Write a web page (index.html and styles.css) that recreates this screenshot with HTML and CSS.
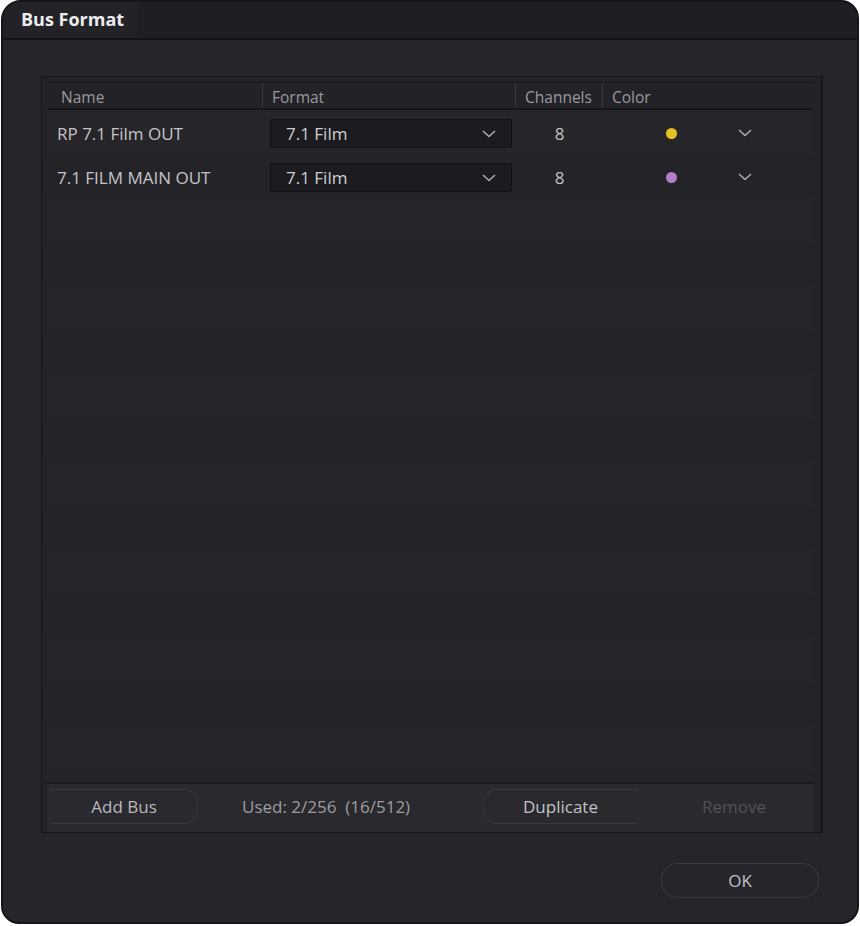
FILE: index.html
```html
<!DOCTYPE html>
<html>
<head>
<meta charset="utf-8">
<title>Bus Format</title>
<link rel="stylesheet" href="styles.css">
</head>
<body>
<div class="window">
  <div class="titlebar">
    <div class="title">Bus Format</div>
  </div>
  <div class="body">
    <div class="panel">
      <div class="panel-inner">
        <div class="thead">
          <div class="th c-name">Name</div>
          <div class="th c-format">Format</div>
          <div class="th c-ch">Channels</div>
          <div class="th c-color">Color</div>
        </div>
        <div class="tbody">
          <div class="row">
            <div class="c-name cell">RP 7.1 Film OUT</div>
            <div class="c-format cell">
              <div class="select"><span>7.1 Film</span>
                <svg class="chev" width="14" height="8" viewBox="0 0 14 8"><path d="M1 1l6 5.5L13 1" fill="none" stroke="#a9a9ae" stroke-width="1.6"/></svg>
              </div>
            </div>
            <div class="c-ch cell">8</div>
            <div class="c-color cell">
              <span class="dot yellow"></span>
              <svg class="chev2" width="14" height="8" viewBox="0 0 14 8"><path d="M1 1l6 5.5L13 1" fill="none" stroke="#a9a9ae" stroke-width="1.6"/></svg>
            </div>
          </div>
          <div class="row">
            <div class="c-name cell">7.1 FILM MAIN OUT</div>
            <div class="c-format cell">
              <div class="select"><span>7.1 Film</span>
                <svg class="chev" width="14" height="8" viewBox="0 0 14 8"><path d="M1 1l6 5.5L13 1" fill="none" stroke="#a9a9ae" stroke-width="1.6"/></svg>
              </div>
            </div>
            <div class="c-ch cell">8</div>
            <div class="c-color cell">
              <span class="dot purple"></span>
              <svg class="chev2" width="14" height="8" viewBox="0 0 14 8"><path d="M1 1l6 5.5L13 1" fill="none" stroke="#a9a9ae" stroke-width="1.6"/></svg>
            </div>
          </div>
        </div>
        <div class="footer">
          <div class="btn add">Add Bus</div>
          <div class="used">Used: 2/256&nbsp; (16/512)</div>
          <div class="btn dup">Duplicate</div>
          <div class="btn remove">Remove</div>
        </div>
      </div>
    </div>
    <div class="actions">
      <div class="ok">OK</div>
    </div>
  </div>
</div>
</body>
</html>
```

FILE: styles.css
```css
* { box-sizing: border-box; }
html, body { margin: 0; padding: 0; background: #ffffff; }
body {
  width: 860px;
  height: 926px;
  font-family: "Open Sans", "Noto Sans", sans-serif;
  overflow: hidden;
}
.window {
  width: 858px;
  height: 924px;
  margin-left: 1px;
  background: #26252a;
  border: 2px solid #151418;
  border-radius: 20px 18px 18px 18px;
  overflow: hidden;
  display: flex;
  flex-direction: column;
}
.titlebar {
  height: 38px;
  flex: none;
  background: #1f1e23;
  border-bottom: 2px solid #141317;
  display: flex;
}
.title {
  width: 134px;
  padding-left: 18px;
  line-height: 34px;
  font-weight: 700;
  font-size: 18px;
  color: #ececef;
  background: #232227;
  letter-spacing: 0;
}
.body {
  flex: 1;
  display: flex;
  flex-direction: column;
  padding: 36px 34px 0 38px;
  background: #26252b;
}
.panel {
  height: 757px;
  border: 1px solid #16151a;
  padding: 5px 8px 0 5px;
  background: #232227;
  border-right-width: 2px;
}
.panel-inner {
  height: 100%;
  display: flex;
  flex-direction: column;
  background: #252429;
  border-top: 1px solid #17161a;
}
.thead {
  height: 27px;
  display: flex;
  border-bottom: 2px solid #17161b;
  background: #232227;
  flex: none;
}
.th {
  font-size: 15.5px;
  color: #9a9a9f;
  line-height: 25px;
  padding-top: 2px;
  border-right: 1px solid #3a393e;
}
.c-name { width: 216px; padding-left: 14px; }
.c-format { width: 253px; padding-left: 9px; }
.c-ch { width: 87px; padding-left: 9px; }
.c-color { flex: 1; padding-left: 9px; border-right: none; }
.tbody {
  flex: 1;
  padding-top: 1px;
  background: repeating-linear-gradient(180deg, #262529 0px, #262529 44px, #242328 44px, #242328 88px);
}
.row {
  height: 44px;
  display: flex;
  align-items: center;
}
.cell {
  font-size: 17px;
  color: #c4c4c8;
}
.row .c-name { padding-left: 10px; }
.row .c-format { padding-left: 7px; }
.select {
  width: 242px;
  height: 29px;
  background: #1c1b1f;
  border: 1px solid #121115;
  border-radius: 2px;
  display: flex;
  align-items: center;
  justify-content: space-between;
  padding: 0 15px 0 15px;
  color: #cfcfd3;
}
.chev { margin-top: 1px; }
.row .c-ch { text-align: center; padding-left: 0; padding-right: 0; }
.row .c-color {
  display: flex;
  align-items: center;
  padding-left: 63px;
}
.dot {
  width: 11px;
  height: 11px;
  border-radius: 50%;
  display: inline-block;
}
.yellow { background: #e2c226; box-shadow: 0 0 0 1px #3a2a10; }
.purple { background: #b47dc7; }
.chev2 { margin-left: 61px; }
.footer {
  height: 50px;
  flex: none;
  display: flex;
  align-items: center;
  padding-bottom: 4px;
  background: #2a292e;
  border-top: 2px solid #1a191d;
  font-size: 17px;
  color: #b7b7bb;
}
.btn {
  flex: none;
  height: 35px;
  line-height: 33px;
  text-align: center;
  border-top: 1px solid #3b3a3f;
  border-bottom: 1px solid #3b3a3f;
}
.add {
  width: 147px;
  margin-left: 4px;
  border-right: 1px solid #35343a;
  border-radius: 0 14px 14px 0;
  color: #b9b9bd;
}
.used {
  flex: none;
  margin-left: 44px;
  color: #9d9da1;
  width: 241px;
}
.dup {
  width: 154px;
  border-left: 1px solid #35343a;
  border-radius: 14px 0 0 14px;
  color: #c2c2c6;
}
.remove {
  width: 160px;
  border-color: transparent;
  color: #535258;
  margin-left: 17px;
}
.actions {
  flex: 1;
  display: flex;
  justify-content: flex-end;
  align-items: flex-start;
  padding-top: 30px;
  padding-right: 4px;
}
.ok {
  width: 158px;
  height: 35px;
  border: 1px solid #3c3b41;
  border-radius: 16px;
  text-align: center;
  line-height: 33px;
  font-size: 17px;
  color: #c0c0c4;
}
```
